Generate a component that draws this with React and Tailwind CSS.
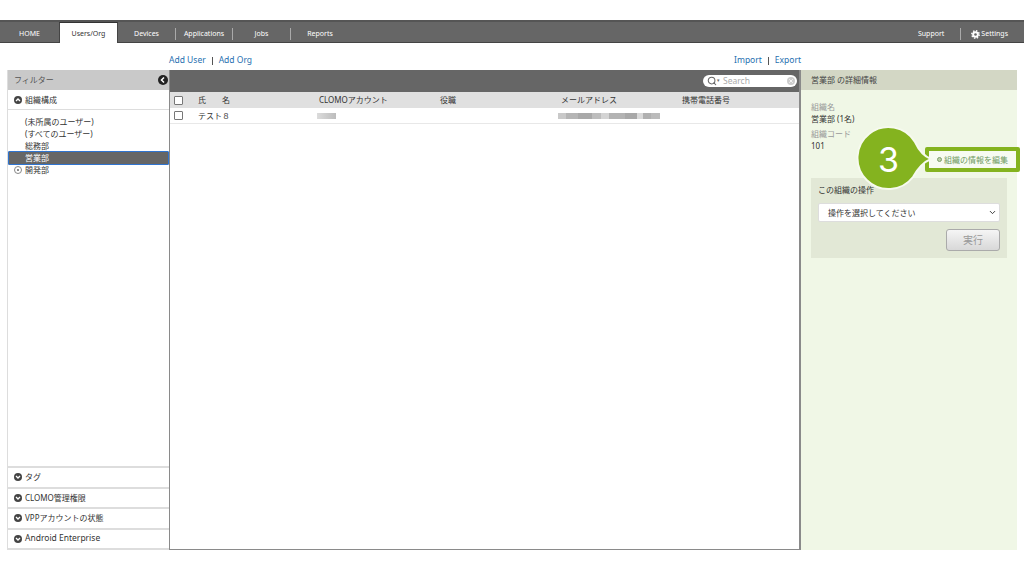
import { ChevronDown, Search, X } from 'lucide-react'

const FONT = "font-['Noto_Sans','Noto_Sans_CJK_JP',sans-serif]"

const NAV_TABS = [
  { label: 'HOME', cls: 'w-[59px]' },
  { label: 'Users/Org', active: true, cls: 'w-[59px]' },
  { label: 'Devices', sep: true, cls: 'w-[58px]' },
  { label: 'Applications', sep: true, cls: 'w-[57px]' },
  { label: 'Jobs', sep: true, cls: 'w-[58px]' },
  { label: 'Reports', cls: 'w-[58px]' },
]

const ORG_ITEMS = ['(未所属のユーザー)', '(すべてのユーザー)', '総務部']
const BOTTOM_SECTIONS = ['タグ', 'CLOMO管理権限', 'VPPアカウントの状態', 'Android Enterprise']

// redacted mail address, blurred in the picture
const MAIL_BLUR = [
  [8, '#c9c9c9'], [12, '#b5b5b5'], [14, '#a9a9a9'], [9, '#bdbdbd'], [8, '#d4d4d4'], [16, '#b3b3b3'],
  [12, '#a8a8a8'], [6, '#d9d9d9'], [8, '#b0b0b0'], [9, '#bbbbbb'],
]

function SectionIcon({ up }) {
  return (
    <svg width="8" height="8" viewBox="0 0 8 8" className="shrink-0">
      <circle cx="4" cy="4" r="4" fill="#444" />
      <path d={up ? 'M2 5 L4 3 L6 5' : 'M2 3 L4 5 L6 3'} fill="none" stroke="#fff" strokeWidth="1.3" />
    </svg>
  )
}

function GearIcon() {
  return (
    <svg width="9" height="9" viewBox="0 0 9 9" className="mr-[1px]">
      <circle cx="4.5" cy="4.5" r="3.7" fill="none" stroke="#fff" strokeWidth="1.5" strokeDasharray="1.45 1.45" />
      <circle cx="4.5" cy="4.5" r="3.3" fill="#fff" />
      <circle cx="4.5" cy="4.5" r="1.3" fill="#666" />
    </svg>
  )
}

function NavBar() {
  return (
    <nav className="mt-5 h-[23px] flex justify-between bg-[#666666] border-t-2 border-t-[#555] border-b border-b-[#444] text-[7px] text-white">
      <div className="flex">
        {NAV_TABS.map((t) => (
          <div
            key={t.label}
            className={
              t.active
                ? `${t.cls} h-[21px] pt-[3px] flex items-center justify-center bg-white text-[#333] border-x border-t border-x-[#444] border-t-[#333]`
                : `${t.cls} flex items-center justify-center ${t.sep ? 'border-r border-r-[#aaa] mt-[6px] mb-[2px]' : 'pt-1'}`
            }
          >
            {t.label}
          </div>
        ))}
      </div>
      <div className="flex items-center pr-4 pt-1">
        <span>Support</span>
        <span className="w-px h-3 bg-[#aaa] ml-[16px] mr-[10px]" />
        <GearIcon />
        <span>Settings</span>
      </div>
    </nav>
  )
}

function LeftPanel() {
  return (
    <aside className="w-[162px] shrink-0 flex flex-col bg-white text-[8px] text-[#333] border-l border-l-[#ddd]">
      <div className="h-5 flex items-center justify-between bg-[#c9c9c9] pl-[6px] pr-[1px] text-[#555]">
        <span>フィルター</span>
        <svg width="10" height="10" viewBox="0 0 10 10">
          <circle cx="5" cy="5" r="5" fill="#222" />
          <path d="M6 2.5 L3.5 5 L6 7.5" fill="none" stroke="#fff" strokeWidth="1.5" />
        </svg>
      </div>
      <div className="h-5 flex items-center gap-[3px] pl-[6px] border-b border-b-[#ddd]">
        <SectionIcon up />
        <span>組織構成</span>
      </div>
      <div className="flex-1 pt-[6px] leading-[12px]">
        {ORG_ITEMS.map((item) => (
          <div key={item} className="pl-[17px] h-[12px]">{item}</div>
        ))}
        <div className="pl-[16px] h-[14px] -mt-[1px] bg-[#666] text-white border-[1.5px] border-[#2f74d0] rounded-[1px] flex items-center">営業部</div>
        <div className="pl-[6px] h-[12px] -mt-[1px] flex items-center gap-[3px]">
          <span className="w-[8px] h-[8px] rounded-full border border-[#888] flex items-center justify-center">
            <span className="w-[2px] h-[2px] rounded-full bg-[#666]" />
          </span>
          <span>開発部</span>
        </div>
      </div>
      {BOTTOM_SECTIONS.map((s) => (
        <div key={s} className="h-[20.5px] flex items-center gap-[3px] pl-[6px] border-t-2 border-t-[#ddd]">
          <SectionIcon />
          <span className={s === 'Android Enterprise' ? 'text-[8.5px]' : ''}>{s}</span>
        </div>
      ))}
      <div className="h-[2px] bg-[#ddd]" />
    </aside>
  )
}

function CenterPanel() {
  return (
    <main className="flex-1 flex flex-col bg-white border-l border-r-2 border-b border-l-[#8a8a8a] border-r-[#8a8a8a] border-b-[#8a8a8a] text-[8px] text-[#333]">
      <div className="h-[22px] bg-[#666] flex items-center justify-end pr-[2px]">
        <div className="w-[94px] h-[12px] rounded-full bg-white flex items-center pl-[4px] pr-[2px] text-[8.5px] text-[#aaa]">
          <Search size={10} stroke="#666" strokeWidth={2.5} />
          <span className="text-[#666] text-[5px] mr-[3px]">▾</span>
          <span className="flex-1">Search</span>
          <span className="w-2 h-2 rounded-full bg-[#ccc] flex items-center justify-center">
            <X size={6} stroke="#fff" strokeWidth={3} />
          </span>
        </div>
      </div>
      <div className="h-4 flex items-center bg-[#e0e0e0]">
        <span className="w-[9px] h-[9px] ml-[4px] rounded-[1px] border border-[#777] bg-white" />
        <span className="w-[136px] pl-[15px] whitespace-pre">氏　　名</span>
        <span className="w-[121px]">CLOMOアカウント</span>
        <span className="w-[121px]">役職</span>
        <span className="w-[121px]">メールアドレス</span>
        <span>携帯電話番号</span>
      </div>
      <div className="h-4 flex items-center border-b border-b-[#e8e8e8]">
        <span className="w-[9px] h-[9px] ml-[4px] rounded-[1px] border border-[#777] bg-white" />
        <span className="w-[136px] pl-[15px]">テスト８</span>
        <span className="w-[242px]">
          <span className="block -ml-[2px] w-[19px] h-[6px] bg-gradient-to-r from-[#dcdcdc] to-[#bcbcbc]" />
        </span>
        <span className="flex h-[6px] -ml-[3px]">
          {MAIL_BLUR.map(([w, c], i) => (
            <span key={i} className="h-full" style={{ width: w, backgroundColor: c }} />
          ))}
        </span>
      </div>
    </main>
  )
}

function RightPanel() {
  return (
    <aside className="w-[216px] shrink-0 flex flex-col bg-[#f0f7e6] text-[8px] text-[#333]">
      <div className="h-5 flex items-center bg-[#d3d7c5] pl-[10px] text-[#444]">営業部 の詳細情報</div>
      <div className="px-[10px] pt-[11px]">
        <div className="text-[#999] leading-[12px]">組織名</div>
        <div className="leading-[12px]">営業部 (1名)</div>
        <div className="text-[#999] leading-[12px] mt-[3px]">組織コード</div>
        <div className="leading-[12px]">101</div>
        <div className="mt-[26px] h-[80px] bg-[#e2e8d6] px-[7px] pt-[6px]">
          <div className="leading-[12px]">この組織の操作</div>
          <div className="mt-[7px] h-[19px] bg-white rounded-[2px] border border-[#ddd] flex items-center justify-between pl-[9px] pr-[2px]">
            <span>操作を選択してください</span>
            <ChevronDown size={9} stroke="#333" strokeWidth={2.5} />
          </div>
          <div className="flex justify-end mt-[7px]">
            <div className="w-[54px] h-[22px] rounded-[3px] border border-[#aaa] bg-gradient-to-b from-[#f5f5f5] to-[#d8d8d8] flex items-center justify-center text-[#999] text-[10px]">
              実行
            </div>
          </div>
        </div>
      </div>
    </aside>
  )
}

function Callout() {
  return (
    <>
      <div className="absolute left-[925px] top-[147px] w-[95px] h-[25px] border-4 border-[#84b31f] bg-[#f7fbf1] rounded-[2px] flex items-center justify-center text-[8px] text-[#6f9a62] whitespace-nowrap">
        <span className="w-[5px] h-[5px] rounded-full border border-[#7d9f6b] bg-[#bcd0a8] mr-[2px]" />
        組織の情報を編集
      </div>
      <svg width="80" height="70" viewBox="0 0 80 70" className="absolute left-[855px] top-[125px]">
        <path
          d="M60 17 Q66 30 76 34 Q66 38 58 52 A31 31 0 1 1 60 17 Z"
          fill="#84b31f"
          stroke="#f6faee"
          strokeWidth="2"
        />
      </svg>
      <div className="absolute left-[868px] top-[137px] w-[41px] h-[46px] flex items-center justify-center text-[34px] leading-none text-white font-['Inter',sans-serif] font-normal">
        3
      </div>
    </>
  )
}

export default function App() {
  return (
    <div className={`relative w-[1024px] h-[576px] overflow-hidden bg-white ${FONT}`}>
      <NavBar />
      <div className="h-[27px] pt-2 flex items-center justify-between pl-[169px] pr-[223px] text-[8.5px] text-[#1f6fb0]">
        <div className="flex items-center gap-[6px]">
          <span>Add User</span>
          <span className="w-px h-2 bg-[#555]" />
          <span>Add Org</span>
        </div>
        <div className="flex items-center gap-[6px]">
          <span>Import</span>
          <span className="w-px h-2 bg-[#555]" />
          <span>Export</span>
        </div>
      </div>
      <div className="flex h-[480px] px-[7px]">
        <LeftPanel />
        <CenterPanel />
        <RightPanel />
      </div>
      <Callout />
    </div>
  )
}
